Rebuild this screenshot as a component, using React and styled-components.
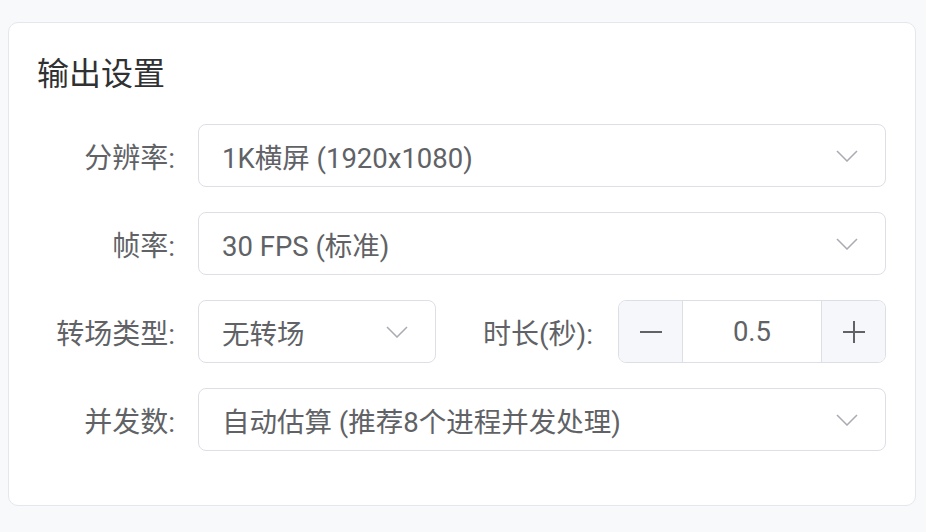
import React from 'react';
import styled, { createGlobalStyle } from 'styled-components';

const GlobalStyle = createGlobalStyle`
  html, body {
    margin: 0;
    padding: 0;
    background-color: #f8f9fb;
  }
  body {
    font-family: "Roboto", "Noto Sans CJK SC", sans-serif;
  }
`;

const Page = styled.div`
  padding: 22px 10px 26px 8px;
`;

const Card = styled.div`
  background-color: #fff;
  border: 1px solid #e4e7ed;
  border-radius: 10px;
  padding: 31px 29px 54px 28px;
`;

const Title = styled.h2`
  margin: 0 0 29px;
  font-size: 32px;
  line-height: 41px;
  font-weight: 400;
  color: #303133;
`;

const Row = styled.div`
  display: flex;
  align-items: center;
  height: 63px;
  margin-bottom: 25px;

  &:last-child {
    margin-bottom: 0;
  }
`;

const Label = styled.label`
  flex: none;
  width: ${(p) => p.$width || '161px'};
  box-sizing: border-box;
  padding-right: ${(p) => p.$pad || '23px'};
  text-align: right;
  font-size: 28px;
  color: #606266;
  white-space: nowrap;
`;

const Select = styled.div`
  display: flex;
  align-items: center;
  justify-content: space-between;
  box-sizing: border-box;
  height: 63px;
  flex: ${(p) => (p.$width ? 'none' : '1')};
  width: ${(p) => p.$width || 'auto'};
  padding: 0 27px 0 23px;
  border: 1px solid #dcdfe6;
  border-radius: 8px;
  font-size: 27.5px;
  color: #606266;
  white-space: nowrap;
`;

const Stepper = styled.div`
  display: flex;
  flex: 1;
  height: 63px;
  box-sizing: border-box;
  border: 1px solid #dcdfe6;
  border-radius: 8px;
  overflow: hidden;
`;

const StepButton = styled.div`
  flex: none;
  width: 63px;
  display: flex;
  align-items: center;
  justify-content: center;
  background-color: #f5f7fa;
  color: #606266;
  border-${(p) => p.$side}: 1px solid #dcdfe6;
`;

const StepValue = styled.div`
  flex: 1;
  display: flex;
  align-items: center;
  justify-content: center;
  font-size: 27.5px;
  color: #606266;
`;

const Chevron = () => (
  <svg width="22" height="12" viewBox="0 0 22 12" fill="none">
    <path d="M1 1 L11 11 L21 1" stroke="#a8abb2" strokeWidth="1.5" />
  </svg>
);

const MinusIcon = () => (
  <svg width="24" height="24" viewBox="0 0 24 24" fill="none">
    <path d="M1 12 H23" stroke="#606266" strokeWidth="2" />
  </svg>
);

const PlusIcon = () => (
  <svg width="22" height="22" viewBox="0 0 22 22" fill="none">
    <path d="M0 11 H22 M11 0 V22" stroke="#606266" strokeWidth="2" />
  </svg>
);

const App = () => {
  return (
    <>
      <GlobalStyle />
      <Page>
        <Card>
          <Title>输出设置</Title>

          <Row>
            <Label>分辨率:</Label>
            <Select>
              <span>1K横屏 (1920x1080)</span>
              <Chevron />
            </Select>
          </Row>

          <Row>
            <Label>帧率:</Label>
            <Select>
              <span>30 FPS (标准)</span>
              <Chevron />
            </Select>
          </Row>

          <Row>
            <Label>转场类型:</Label>
            <Select $width="238px">
              <span>无转场</span>
              <Chevron />
            </Select>
            <Label $width="182px" $pad="25px">时长(秒):</Label>
            <Stepper>
              <StepButton $side="right">
                <MinusIcon />
              </StepButton>
              <StepValue>0.5</StepValue>
              <StepButton $side="left">
                <PlusIcon />
              </StepButton>
            </Stepper>
          </Row>

          <Row>
            <Label>并发数:</Label>
            <Select>
              <span>自动估算 (推荐8个进程并发处理)</span>
              <Chevron />
            </Select>
          </Row>
        </Card>
      </Page>
    </>
  );
};

export default App;
